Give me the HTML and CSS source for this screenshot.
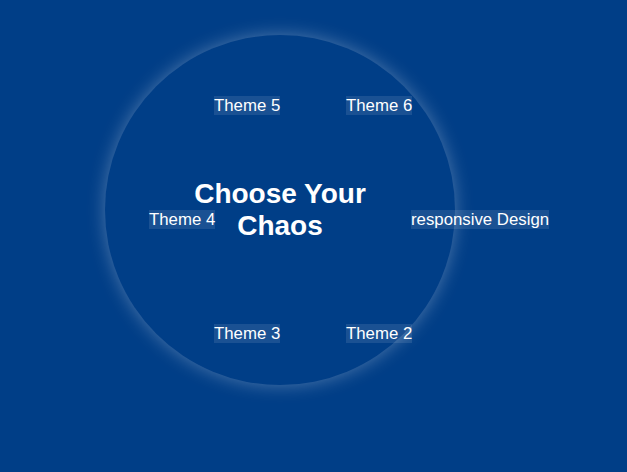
FILE: index.html
```html
<!DOCTYPE html>
<html lang="en">
<head>
<meta charset="utf-8">
<title>Choose Your Chaos</title>
<link rel="stylesheet" href="styles.css">
</head>
<body>
<main class="stage">
  <div class="orbit">
    <h1 class="title">Choose Your<br>Chaos</h1>
    <a class="item item-5" href="#">Theme 5</a>
    <a class="item item-6" href="#">Theme 6</a>
    <a class="item item-4" href="#">Theme 4</a>
    <a class="item item-1" href="#">responsive Design</a>
    <a class="item item-3" href="#">Theme 3</a>
    <a class="item item-2" href="#">Theme 2</a>
  </div>
</main>
</body>
</html>
```
FILE: styles.css
```css
html, body {
  margin: 0;
  height: 100%;
}
body {
  background: #003e87;
  font-family: "Liberation Sans", Arial, sans-serif;
  color: #fff;
  overflow: hidden;
}
.stage {
  padding: 35px 0 0 105px;
}
.orbit {
  position: relative;
  width: 350px;
  height: 350px;
  border-radius: 50%;
  background: #003e87;
  box-shadow: 0 0 18px rgba(255, 255, 255, 0.3);
  display: flex;
  align-items: center;
  justify-content: center;
}
.title {
  margin: 0;
  font-size: 28px;
  font-weight: bold;
  line-height: 32px;
  text-align: center;
  transform: translate(0, 0);
}
.item {
  position: absolute;
  font-size: 16.8px;
  line-height: 19px;
  color: #fff;
  text-decoration: none;
  background: rgba(255, 255, 255, 0.1);
  white-space: nowrap;
}
.item-5 { left: 109px; top: 61px; }
.item-6 { left: 241px; top: 61px; }
.item-4 { left: 44px; top: 175px; }
.item-1 { left: 306px; top: 175px; }
.item-3 { left: 109px; top: 289px; }
.item-2 { left: 241px; top: 289px; }
```
